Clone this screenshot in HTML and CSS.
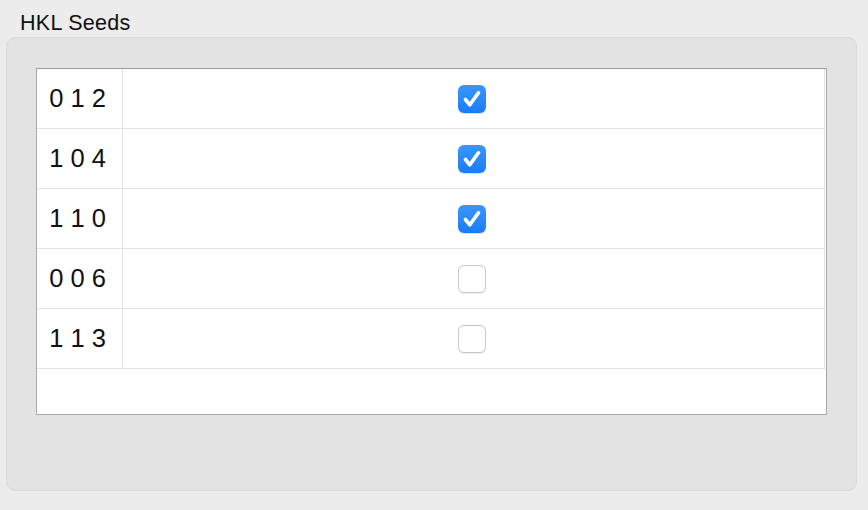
FILE: index.html
```html
<!DOCTYPE html>
<html>
<head>
<meta charset="utf-8">
<link rel="stylesheet" href="styles.css">
</head>
<body>
<div class="title">HKL Seeds</div>
<div class="group">
  <div class="table">
    <div class="row"><div class="hkl">0 1 2</div><div class="cell"><span class="cb on"><svg viewBox="0 0 28 28"><path d="M7.5 14.5 L11.8 19.8 L20.5 7.8" fill="none" stroke="#fff" stroke-width="3.6" stroke-linecap="round" stroke-linejoin="round"/></svg></span></div></div>
    <div class="row"><div class="hkl">1 0 4</div><div class="cell"><span class="cb on"><svg viewBox="0 0 28 28"><path d="M7.5 14.5 L11.8 19.8 L20.5 7.8" fill="none" stroke="#fff" stroke-width="3.6" stroke-linecap="round" stroke-linejoin="round"/></svg></span></div></div>
    <div class="row"><div class="hkl">1 1 0</div><div class="cell"><span class="cb on"><svg viewBox="0 0 28 28"><path d="M7.5 14.5 L11.8 19.8 L20.5 7.8" fill="none" stroke="#fff" stroke-width="3.6" stroke-linecap="round" stroke-linejoin="round"/></svg></span></div></div>
    <div class="row"><div class="hkl">0 0 6</div><div class="cell"><span class="cb"></span></div></div>
    <div class="row"><div class="hkl">1 1 3</div><div class="cell"><span class="cb"></span></div></div>
  </div>
</div>
</body>
</html>
```
FILE: styles.css
```css
html, body {
  margin: 0;
  padding: 0;
  background: #ececec;
  font-family: "Liberation Sans", Arial, sans-serif;
  color: #111;
}
.title {
  font-size: 21.5px;
  line-height: 24px;
  height: 24px;
  padding: 11px 0 0 20px;
  margin-bottom: 2px;
  letter-spacing: 0.3px;
}
.group {
  margin-left: 6px;
  border: 1px solid #dadada;
  border-radius: 9px;
  background: #e3e3e3;
  padding: 30px 0 0 29px;
  box-sizing: border-box;
  height: 454px;
  width: 851px;
}
.table {
  width: 791px;
  height: 347px;
  box-sizing: border-box;
  border: 1px solid #a8a8a8;
  border-top-color: #9c9c9c;
  background: #fff;
}
.row {
  display: flex;
  width: 788px;
  height: 60px;
  box-sizing: border-box;
  border-right: 1px solid #e3e3e3;
  border-bottom: 1px solid #e3e3e3;
}
.hkl {
  width: 86px;
  box-sizing: border-box;
  border-right: 1px solid #e3e3e3;
  display: flex;
  align-items: center;
  justify-content: center;
  font-size: 25.5px;
  padding-right: 4px;
}
.cell {
  flex: 1;
  display: flex;
  align-items: center;
  justify-content: center;
  padding-right: 4px;
}
.cb {
  width: 28px;
  height: 28px;
  box-sizing: border-box;
  border-radius: 6px;
  border: 1px solid #c9c9c9;
  background: #fff;
  box-shadow: 0 0.5px 1px rgba(0,0,0,0.08);
  display: block;
}
.cb.on {
  border: none;
  background: linear-gradient(#3b95fd, #1a7cf6);
  box-shadow: 0 0.5px 1px rgba(0,0,0,0.15);
}
.cb svg {
  display: block;
  width: 28px;
  height: 28px;
}
```
